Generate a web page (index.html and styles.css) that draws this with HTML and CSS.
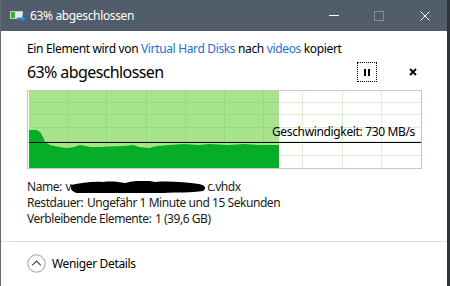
FILE: index.html
```html
<!DOCTYPE html>
<html>
<head>
    <title>63% abgeschlossen</title>
    <link rel="stylesheet" href="styles.css">
</head>
<body>
    <div class="window">
        <div class="titlebar">
            <svg class="app-icon" width="16" height="12" viewBox="0 0 16 12">
                <rect x="0.5" y="1.5" width="12" height="7" fill="#e8e8e8" stroke="#c8c8c8"/>
                <rect x="1" y="2" width="4" height="6" fill="#2fb52f"/>
                <path d="M7 7.5h5v-2.5l3.5 3.5-3.5 3.5v-2.5h-5z" fill="#2a8ee0"/>
            </svg>
            <span class="title">63% abgeschlossen</span>
            <div class="controls">
                <span class="ctl ctl-min"></span>
                <span class="ctl ctl-max"></span>
                <svg class="ctl ctl-close" width="10" height="10" viewBox="0 0 10 10">
                    <path d="M0.5 0.5l9 9M9.5 0.5l-9 9" stroke="#fff" stroke-width="1"/>
                </svg>
            </div>
        </div>

        <div class="content">
            <p class="desc">Ein Element wird von <span class="link">Virtual Hard Disks</span> nach <span class="link">videos</span> kopiert</p>

            <div class="head">
                <h1>63% abgeschlossen</h1>
                <button class="btn-pause" title="Anhalten">
                    <span class="bar"></span><span class="bar"></span>
                </button>
                <button class="btn-cancel" title="Abbrechen">
                    <svg width="8" height="8" viewBox="0 0 8 8">
                        <path d="M1 1l6 6M7 1l-6 6" stroke="#000" stroke-width="1.8"/>
                    </svg>
                </button>
            </div>

            <div class="graph">
                <svg width="392" height="77" viewBox="0 0 392 77">
                    <rect width="392" height="77" fill="#fff"/>
                    <g stroke="#d9f2d4" stroke-width="1">
                        <path d="M38.5 0v77M77.5 0v77M117.5 0v77M156.5 0v77M195.5 0v77M234.5 0v77M273.5 0v77M313.5 0v77M352.5 0v77"/>
                        <path d="M0 11.5h392M0 23.5h392M0 36.5h392M0 50.5h392M0 64.5h392"/>
                    </g>
                    <rect width="250" height="77" fill="#a8e48c"/>
                    <g stroke="#96dc7a" stroke-width="1">
                        <path d="M38.5 0v77M77.5 0v77M117.5 0v77M156.5 0v77M195.5 0v77M234.5 0v77"/>
                        <path d="M0 11.5h250M0 23.5h250M0 36.5h250M0 50.5h250M0 64.5h250"/>
                    </g>
                    <polygon fill="#06ad26" points="0,39 8,39 11,41 14,46 16,51 21,54 30,56 38,57 45,56 51,54 56,55 62,56 71,56 80,55.5 95,55 104,54 110,56 120,57 128,55 140,54 155,53 170,54 180,53 200,54 215,53 230,54 250,54 250,77 0,77"/>
                    <rect y="51" width="392" height="1" fill="#000"/>
                </svg>
                <span class="speed">Geschwindigkeit: 730 MB/s</span>
            </div>

            <div class="details">
                <div class="row"><span class="label">Name:</span> v<svg class="redact" width="136" height="12" viewBox="0 0 136 12">
                    <path d="M0 4c10-2 22-4 32-3c8-1 16 0 22 1c12-3 22-3 30-1c14-1 30 0 44 2c6 1 8 4 4 7c-12 2-26 1-40 2c-12 1-26 1-38 1c-14 1-28 0-40 0c-10 0-16-3-14-9z" fill="#000"/>
                </svg>c.vhdx</div>
                <div class="row"><span class="label">Restdauer:</span> Ungefähr 1 Minute und 15 Sekunden</div>
                <div class="row"><span class="label">Verbleibende Elemente:</span> 1 (39,6 GB)</div>
            </div>
        </div>

        <div class="footer">
            <svg class="toggle" width="19" height="19" viewBox="0 0 19 19">
                <circle cx="9.5" cy="9.5" r="8.7" fill="none" stroke="#9a9a9a" stroke-width="1"/>
                <path d="M5.2 11.3L9.5 7l4.3 4.3" fill="none" stroke="#444" stroke-width="1.2"/>
            </svg>
            <span>Weniger Details</span>
        </div>
    </div>
</body>
</html>
```

FILE: styles.css
```css
body {
    margin: 0;
    font-family: "Noto Sans", "Open Sans", sans-serif;
    font-size: 12px;
    letter-spacing: -0.35px;
    color: #000;
    background: #fff;
}

.window {
    width: 446px;
    height: 286px;
    border-left: 1px solid #5f6977;
    border-right: 3px solid #30343b;
    background: #fff;
    overflow: hidden;
}

/* title bar */
.titlebar {
    height: 31px;
    background: #525d6b;
    color: #fff;
    display: flex;
    align-items: center;
}

.app-icon {
    margin-left: 9px;
    margin-right: 4px;
}

.title {
    font-size: 12px;
    margin-top: -1px;
}

.controls {
    margin-left: auto;
    display: flex;
    align-items: center;
}

.ctl {
    display: block;
}

.ctl-min {
    width: 10px;
    height: 1px;
    background: #fff;
    margin-right: 35px;
    margin-top: -1px;
}

.ctl-max {
    width: 8px;
    height: 8px;
    border: 1px solid #848c97;
    margin-right: 36px;
}

.ctl-close {
    margin-right: 17px;
}

/* main area */
.content {
    padding: 10px 0 0 26px;
}

.desc {
    margin: 0;
    line-height: 16px;
}

.link {
    color: #1a6fd6;
}

.head {
    display: flex;
    align-items: center;
    height: 22px;
    margin-top: 4px;
    padding-right: 30px;
}

h1 {
    margin: 0;
    font-size: 16px;
    font-weight: normal;
    line-height: 22px;
    letter-spacing: -0.6px;
}

.btn-pause {
    margin-left: auto;
    width: 20px;
    height: 20px;
    padding: 0;
    border: 1px dotted #000;
    background: #fff;
    display: flex;
    align-items: center;
    justify-content: center;
    gap: 2px;
}

.btn-pause .bar {
    width: 2px;
    height: 7px;
    background: #000;
}

.btn-cancel {
    margin-left: 32px;
    width: 8px;
    height: 8px;
    padding: 0;
    border: none;
    background: none;
    display: flex;
}

.graph {
    position: relative;
    width: 392px;
    height: 77px;
    margin-top: 7px;
    border: 1px solid #c6c6c6;
    padding-left: 1px;
}

.graph svg {
    display: block;
}

.speed {
    position: absolute;
    right: 6px;
    top: 34px;
    line-height: 14px;
}

.details {
    margin-top: 10px;
    line-height: 16px;
    color: #1a1a1a;
    letter-spacing: -0.45px;
}

.label {
    margin-right: 1px;
}

.redact {
    vertical-align: -2px;
}

/* bottom */
.footer {
    margin-top: 14px;
    border-top: 1px solid #e2e2e2;
    height: 43px;
    padding-left: 26px;
    display: flex;
    align-items: center;
    gap: 6px;
    font-size: 12px;
}
```
